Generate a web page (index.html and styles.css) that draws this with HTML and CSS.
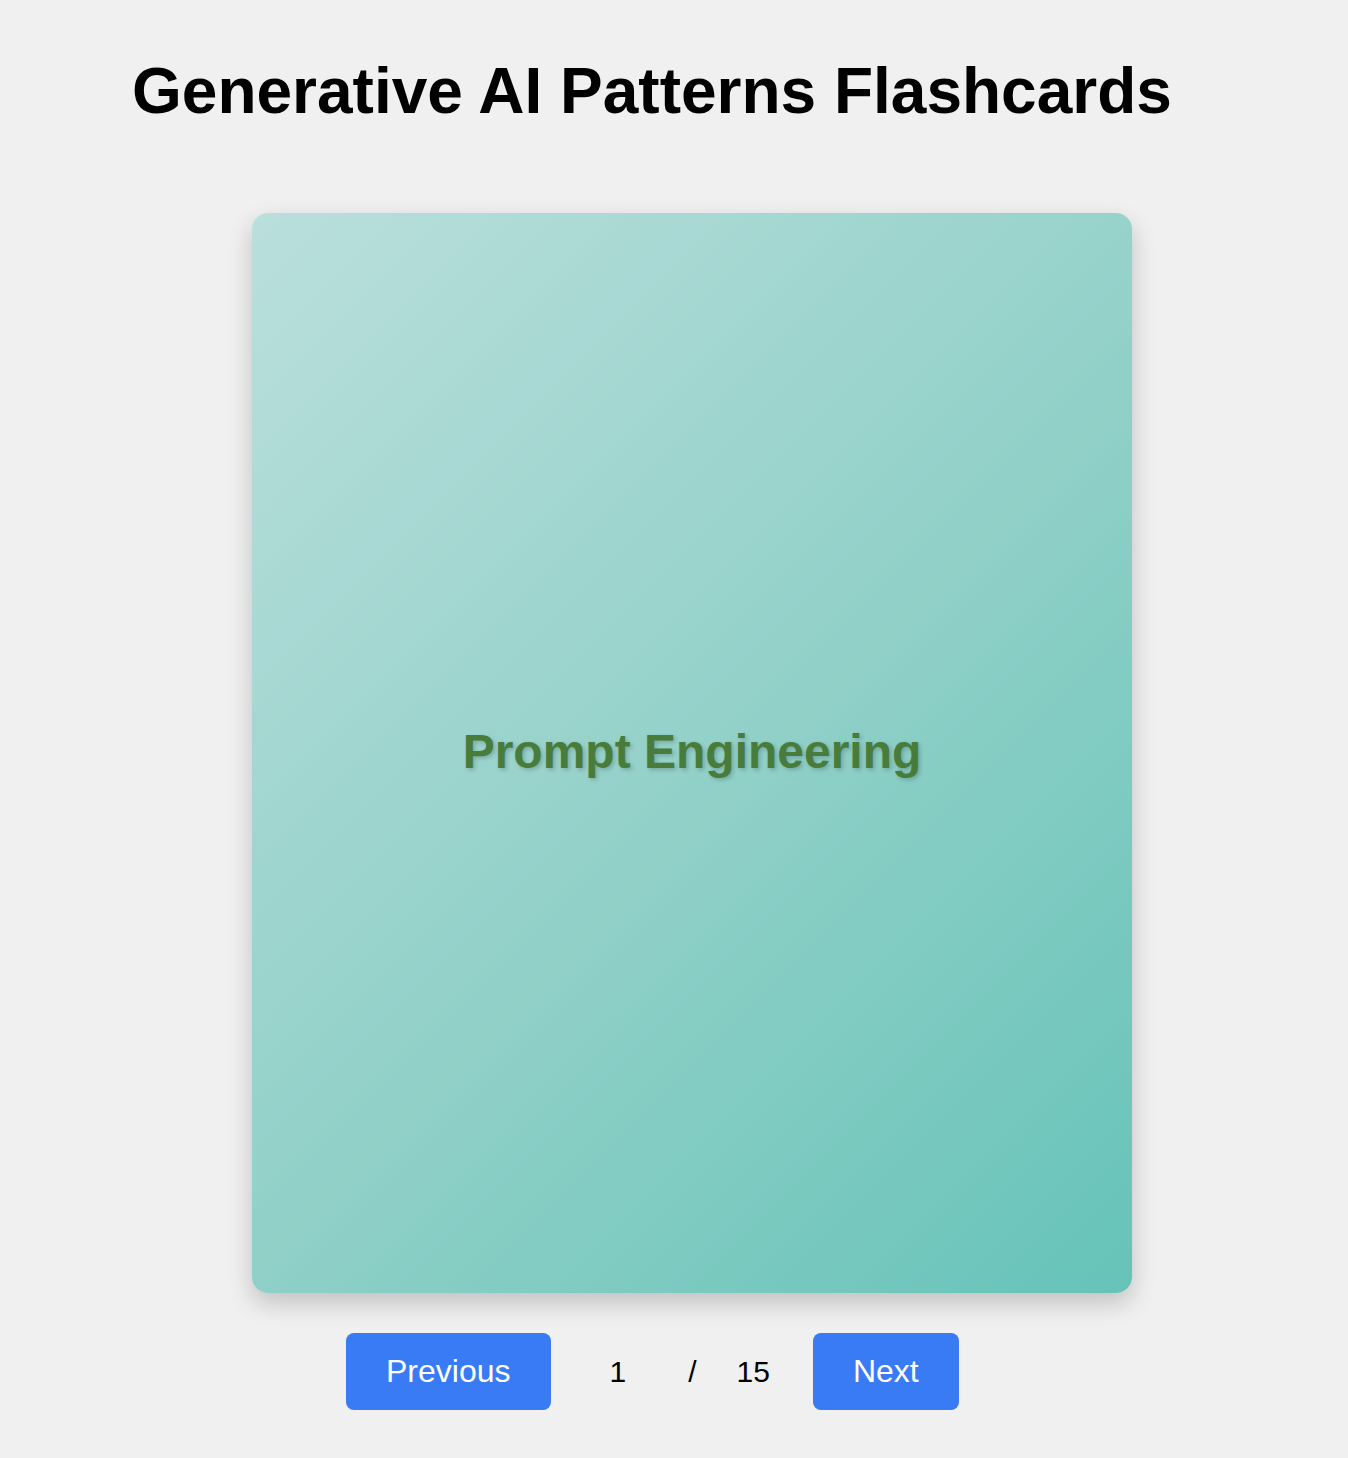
FILE: index.html
```html
<!DOCTYPE html>
<html lang="en">
<head>
<meta charset="utf-8">
<title>Generative AI Patterns Flashcards</title>
<link rel="stylesheet" href="styles.css">
</head>
<body>
<main class="page">
  <h1 class="title">Generative AI Patterns Flashcards</h1>
  <section class="card">
    <div class="card-front">Prompt Engineering</div>
  </section>
  <nav class="controls">
    <button class="btn">Previous</button>
    <span class="count current">1</span>
    <span class="count sep">/</span>
    <span class="count total">15</span>
    <button class="btn">Next</button>
  </nav>
</main>
</body>
</html>
```
FILE: styles.css
```css
html, body {
  margin: 0;
  padding: 0;
  background: #f0f0f0;
}

body {
  font-family: "Liberation Sans", Arial, Helvetica, sans-serif;
  color: #000;
}

.page {
  padding-top: 54px;
  padding-bottom: 40px;
}

.title {
  margin: 0 0 0 132px;
  font-size: 64px;
  font-weight: 700;
  line-height: normal;
}

.card {
  width: 880px;
  height: 1080px;
  margin: 85px 0 0 252px;
  border-radius: 16px;
  background: linear-gradient(135deg, #badfdc 0%, #93d1c9 50%, #66c3b8 100%);
  box-shadow: 0 10px 25px rgba(0, 0, 0, 0.2);
  display: flex;
  align-items: center;
  justify-content: center;
}

.card-front {
  font-size: 48px;
  font-weight: 700;
  color: #487c3a;
  text-shadow: 2px 2px 4px rgba(0, 0, 0, 0.2);
  margin-top: -3px;
}

.controls {
  display: flex;
  align-items: center;
  gap: 40px;
  margin: 40px 0 0 346px;
}

.btn {
  font-family: "Liberation Sans", Arial, Helvetica, sans-serif;
  font-size: 32px;
  line-height: 37px;
  padding: 20px 40px;
  border: none;
  border-radius: 8px;
  background: #387bf5;
  color: #fff;
  cursor: pointer;
}

.count {
  font-size: 30px;
}

.current {
  margin: 0 22px 0 19px;
}

.total {
  margin-right: 3px;
}
```
